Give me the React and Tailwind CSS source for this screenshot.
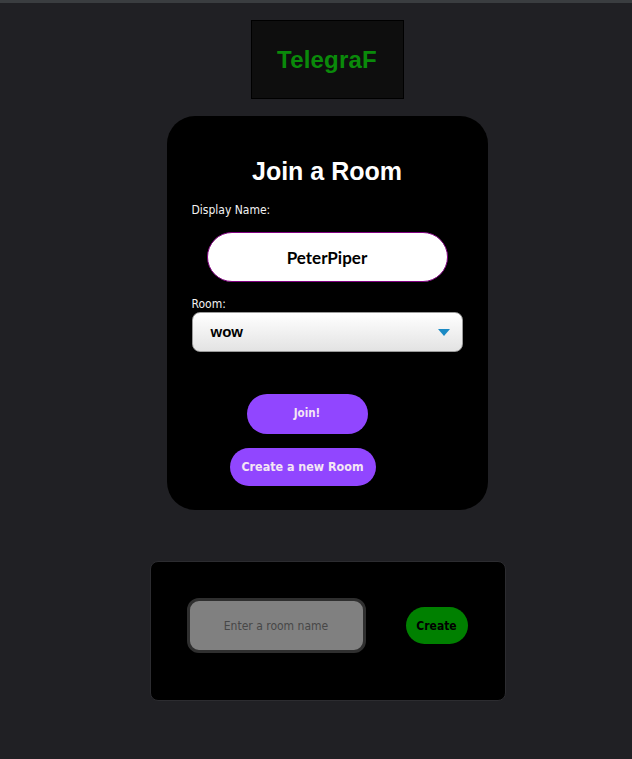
export default function App() {
  return (
    <div className="min-h-[759px] bg-[#202024] font-['Liberation_Sans',Arial,sans-serif]">
      <div className="h-[3px] bg-[#3a3d40]" />

      {/* Logo */}
      <div className="flex justify-center pt-[17px] pl-[22px]">
        <div className="w-[153px] h-[79px] bg-[#0e0e0e] border border-black flex items-center justify-center">
          <span className="text-[#0a8a0a] text-[24px] font-bold tracking-[0.2px]">TelegraF</span>
        </div>
      </div>

      {/* Join card */}
      <div className="flex justify-center mt-[17px] pl-[22px]">
        <div className="w-[321px] h-[394px] bg-black rounded-[28px] px-[25px] pt-[40px] text-white">
          <h1 className="text-center text-[25px] font-bold leading-[30px]">Join a Room</h1>
          <label className="block text-[12px] mt-[17px] leading-[14px] font-['DejaVu_Sans_Condensed','Liberation_Sans',sans-serif] text-[#f2f2f2]">Display Name:</label>
          <div className="flex justify-center mt-[15px]">
            <input
              defaultValue="PeterPiper"
              className="w-[241px] h-[50px] rounded-full bg-white border border-[#800080] text-center text-black text-[17px] font-bold font-['Lato',sans-serif] outline-none"
            />
          </div>
          <label className="block text-[12px] mt-[15px] leading-[14px] font-['DejaVu_Sans_Condensed','Liberation_Sans',sans-serif] text-[#f2f2f2]">Room:</label>
          <div className="relative mt-[1px] w-[271px] h-[40px] rounded-[8px] border border-[#9a9a9a] bg-gradient-to-b from-white to-[#e3e3e3] flex items-center pl-[18px]">
            <span className="text-black text-[15px] font-bold">wow</span>
            <svg className="absolute right-[12px] top-[16px]" width="12" height="7" viewBox="0 0 12 7">
              <polygon points="0,0 12,0 6,7" fill="#1b8ac4" />
            </svg>
          </div>
          <div className="flex flex-col items-start mt-[42px]">
            <button className="ml-[55px] w-[121px] h-[40px] rounded-full bg-[#9146ff] text-[#f4e6f4] text-[11.5px] font-bold font-['DejaVu_Sans_Condensed',sans-serif]">
              Join!
            </button>
            <button className="ml-[38px] w-[146px] h-[38px] mt-[14px] rounded-full bg-[#9146ff] text-[#f4e6f4] text-[12.4px] font-bold font-['DejaVu_Sans_Condensed',sans-serif]">
              Create a new Room
            </button>
          </div>
        </div>
      </div>

      {/* Create room card */}
      <div className="flex justify-center mt-[51px] pl-[23px]">
        <div className="w-[356px] h-[140px] bg-black rounded-[8px] border border-[#2c2c30] flex items-start pt-[36px]">
          <input
            placeholder="Enter a room name"
            className="ml-[36px] w-[179px] h-[55px] rounded-[12px] bg-[#808080] border-[3px] border-[#2f2f2f] text-center text-[12px] font-['DejaVu_Sans_Condensed',sans-serif] placeholder:text-[#474747] outline-none"
          />
          <button className="ml-[40px] mt-[9px] w-[62px] h-[37px] rounded-full bg-[#008000] text-black text-[12px] font-bold font-['DejaVu_Sans_Condensed',sans-serif]">
            Create
          </button>
        </div>
      </div>
    </div>
  );
}
